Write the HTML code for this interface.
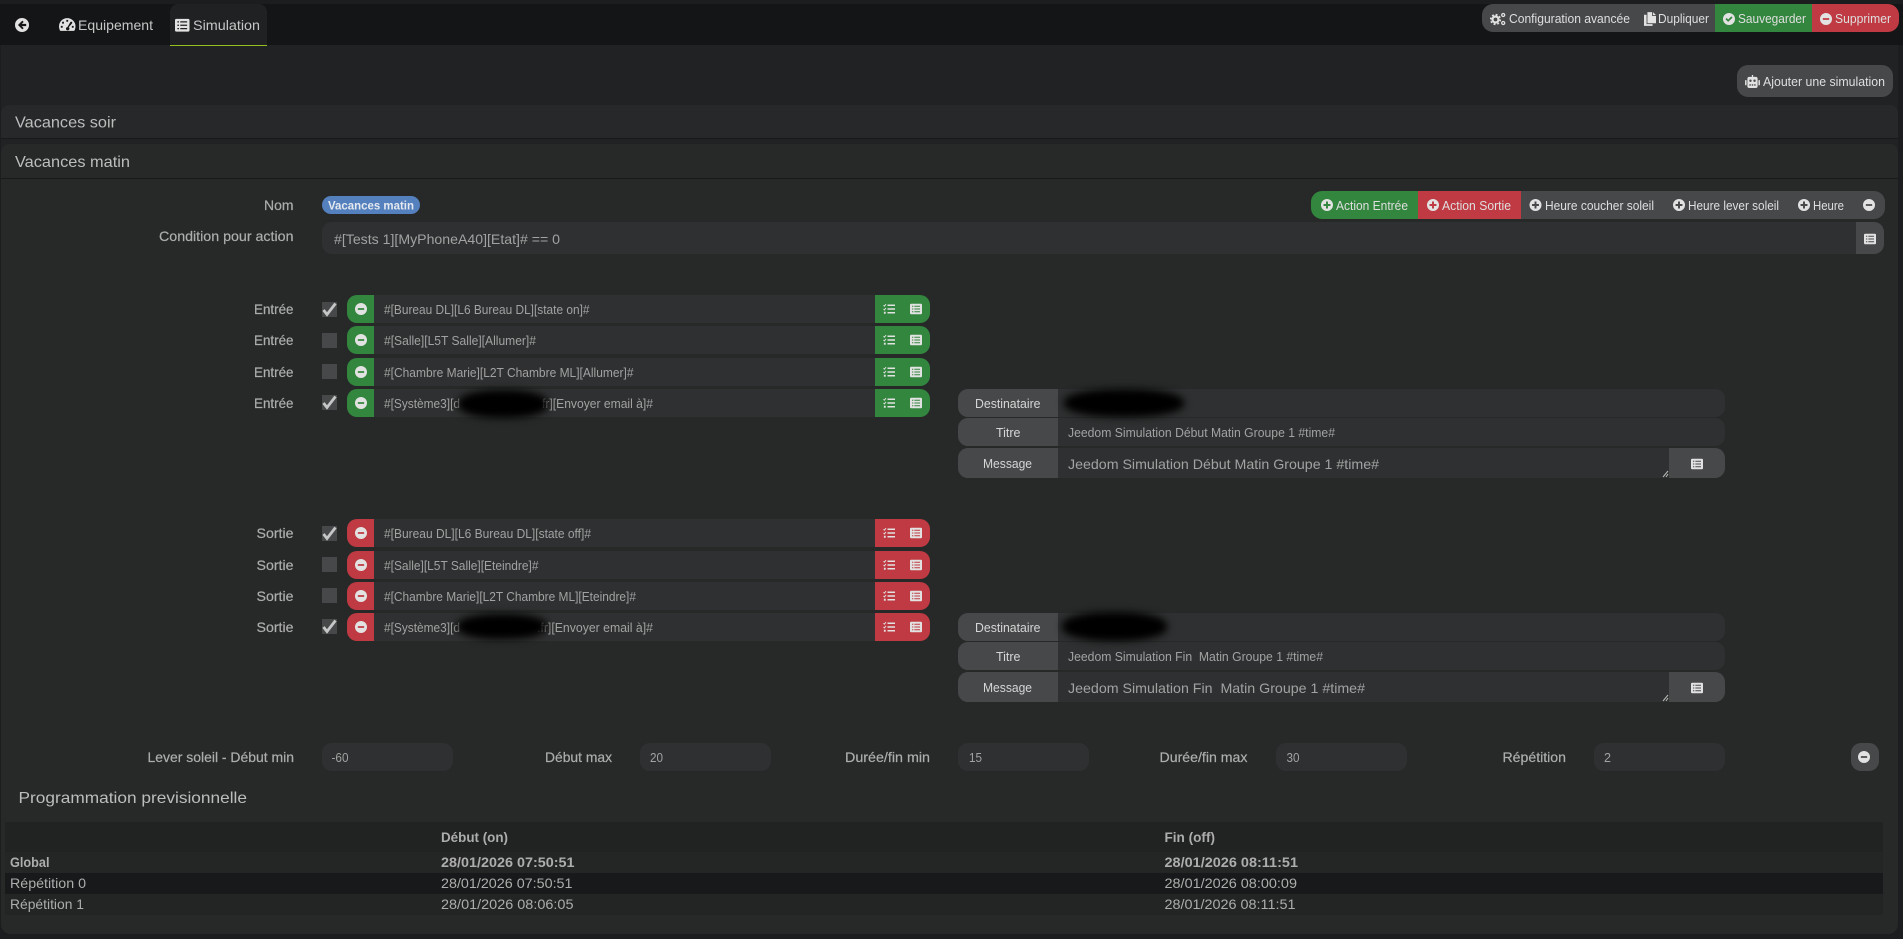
<!DOCTYPE html>
<html lang="fr"><head><meta charset="utf-8"><title>Simulation</title>
<style>
html,body{margin:0;padding:0;width:1903px;height:939px;overflow:hidden;background:#1c1d1e}
.b{position:absolute;box-sizing:border-box}
.inp{background:#2f3031}
.gr{background:#47484a}
.g{background:#33863e}
.r{background:#bf3a42}
svg.ov{position:absolute;left:0;top:0}
text{font-family:"Liberation Sans",Arial,sans-serif;font-size:14px;fill:#adadad;stroke:#adadad;stroke-width:.2px}
.w{fill:#dfdfdf;font-size:13px;stroke:none}
.h{fill:#c6c6c6;font-size:14px;stroke:none}
.hd{fill:#bdbdbd;font-size:16px;stroke:none}
.s{fill:#a2a2a2;font-size:12.5px;stroke:none}
.m{fill:#a2a2a2;font-size:14px;stroke:none}
.lb{fill:#d6d6d6;font-size:13px;stroke:none}
.t{stroke:none}
.bd{font-weight:bold;stroke:none}
.ic{color:#e2e2e2}
.blk{position:absolute;background:#000;filter:blur(4px);border-radius:45%}
</style></head><body>
<div class="b" style="left:0;top:4px;width:1903px;height:41px;background:#141516"></div>
<div class="b" style="left:0;top:45px;width:1903px;height:894px;background:#1c1d1e"></div>
<div class="b" style="left:1px;top:45px;width:1897px;height:889px;background:#212223;border-radius:0 0 10px 10px"></div>
<div class="b" style="left:170px;top:4px;width:97px;height:42px;background:#202122;border-radius:8px 8px 0 0;border-bottom:1px solid #93c01f"></div>

<div class="b" style="left:1px;top:105px;width:1897px;height:34px;background:#262829;border-radius:8px 8px 0 0;border-bottom:1px solid #18191a"></div>
<div class="b" style="left:1px;top:144px;width:1897px;height:790px;background:#272929;border-radius:8px 8px 10px 10px"></div>
<div class="b" style="left:1px;top:178px;width:1897px;height:1px;background:#18191a"></div>

<!-- top buttons -->
<div class="b gr" style="left:1482px;top:4px;width:233px;height:28px;border-radius:11px 0 0 11px"></div>
<div class="b g" style="left:1715px;top:4px;width:97px;height:28px"></div>
<div class="b r" style="left:1812px;top:4px;width:87px;height:28px;border-radius:0 11px 11px 0"></div>
<div class="b gr" style="left:1737px;top:65px;width:156px;height:32px;border-radius:11px"></div>

<!-- name/condition -->
<div class="b" style="left:322px;top:196px;width:98px;height:18px;background:#5480bd;border-radius:9px"></div>
<div class="b inp" style="left:322px;top:222px;width:1534px;height:32px;border-radius:10px 0 0 10px"></div>
<div class="b gr" style="left:1856px;top:222px;width:28px;height:32px;border-radius:0 10px 10px 0"></div>
<div class="b g" style="left:1311px;top:191px;width:107px;height:28px;border-radius:11px 0 0 11px"></div>
<div class="b r" style="left:1418px;top:191px;width:103px;height:28px"></div>
<div class="b gr" style="left:1521px;top:191px;width:364px;height:28px;border-radius:0 11px 11px 0"></div>

<!-- action rows entree -->
<div class="b g" style="left:347px;top:295px;width:583px;height:28px;border-radius:10px"></div>
<div class="b inp" style="left:374px;top:295px;width:501px;height:28px"></div>
<div class="b g" style="left:347px;top:326px;width:583px;height:28px;border-radius:10px"></div>
<div class="b inp" style="left:374px;top:326px;width:501px;height:28px"></div>
<div class="b g" style="left:347px;top:358px;width:583px;height:28px;border-radius:10px"></div>
<div class="b inp" style="left:374px;top:358px;width:501px;height:28px"></div>
<div class="b g" style="left:347px;top:389px;width:583px;height:28px;border-radius:10px"></div>
<div class="b inp" style="left:374px;top:389px;width:501px;height:28px"></div>
<!-- action rows sortie -->
<div class="b r" style="left:347px;top:519px;width:583px;height:28px;border-radius:10px"></div>
<div class="b inp" style="left:374px;top:519px;width:501px;height:28px"></div>
<div class="b r" style="left:347px;top:551px;width:583px;height:28px;border-radius:10px"></div>
<div class="b inp" style="left:374px;top:551px;width:501px;height:28px"></div>
<div class="b r" style="left:347px;top:582px;width:583px;height:28px;border-radius:10px"></div>
<div class="b inp" style="left:374px;top:582px;width:501px;height:28px"></div>
<div class="b r" style="left:347px;top:613px;width:583px;height:28px;border-radius:10px"></div>
<div class="b inp" style="left:374px;top:613px;width:501px;height:28px"></div>
<!-- checkboxes -->
<div class="b gr" style="left:322px;top:302px;width:15px;height:15px"></div>
<div class="b gr" style="left:322px;top:333px;width:15px;height:15px"></div>
<div class="b gr" style="left:322px;top:364px;width:15px;height:15px"></div>
<div class="b gr" style="left:322px;top:395px;width:15px;height:15px"></div>
<div class="b gr" style="left:322px;top:526px;width:15px;height:15px"></div>
<div class="b gr" style="left:322px;top:557px;width:15px;height:15px"></div>
<div class="b gr" style="left:322px;top:588px;width:15px;height:15px"></div>
<div class="b gr" style="left:322px;top:619px;width:15px;height:15px"></div>

<!-- message groups -->
<div class="b gr" style="left:958px;top:389px;width:100px;height:28px;border-radius:10px 0 0 10px"></div>
<div class="b inp" style="left:1058px;top:389px;width:667px;height:28px;border-radius:0 10px 10px 0"></div>
<div class="b gr" style="left:958px;top:418px;width:100px;height:28px;border-radius:10px 0 0 10px"></div>
<div class="b inp" style="left:1058px;top:418px;width:667px;height:28px;border-radius:0 10px 10px 0"></div>
<div class="b gr" style="left:958px;top:448px;width:100px;height:30px;border-radius:10px 0 0 10px"></div>
<div class="b inp" style="left:1058px;top:448px;width:611px;height:30px"></div>
<div class="b gr" style="left:1669px;top:448px;width:56px;height:30px;border-radius:0 10px 10px 0"></div>

<div class="b gr" style="left:958px;top:613px;width:100px;height:28px;border-radius:10px 0 0 10px"></div>
<div class="b inp" style="left:1058px;top:613px;width:667px;height:28px;border-radius:0 10px 10px 0"></div>
<div class="b gr" style="left:958px;top:642px;width:100px;height:28px;border-radius:10px 0 0 10px"></div>
<div class="b inp" style="left:1058px;top:642px;width:667px;height:28px;border-radius:0 10px 10px 0"></div>
<div class="b gr" style="left:958px;top:672px;width:100px;height:30px;border-radius:10px 0 0 10px"></div>
<div class="b inp" style="left:1058px;top:672px;width:611px;height:30px"></div>
<div class="b gr" style="left:1669px;top:672px;width:56px;height:30px;border-radius:0 10px 10px 0"></div>

<!-- bottom inputs -->
<div class="b inp" style="left:322px;top:743px;width:131px;height:28px;border-radius:10px"></div>
<div class="b inp" style="left:640px;top:743px;width:131px;height:28px;border-radius:10px"></div>
<div class="b inp" style="left:958px;top:743px;width:131px;height:28px;border-radius:10px"></div>
<div class="b inp" style="left:1276px;top:743px;width:131px;height:28px;border-radius:10px"></div>
<div class="b inp" style="left:1594px;top:743px;width:131px;height:28px;border-radius:10px"></div>
<div class="b gr" style="left:1851px;top:743px;width:28px;height:28px;border-radius:10px"></div>

<!-- table -->
<div class="b" style="left:5px;top:822px;width:1878px;height:30px;background:#212222"></div>
<div class="b" style="left:5px;top:852px;width:1878px;height:21px;background:#242525"></div>
<div class="b" style="left:5px;top:873px;width:1878px;height:21px;background:#18191a"></div>
<div class="b" style="left:5px;top:894px;width:1878px;height:21px;background:#232424"></div>

<svg class="ov" width="1903" height="939" viewBox="0 0 1903 939" xmlns="http://www.w3.org/2000/svg">
<defs>
<symbol id="minus" viewBox="0 0 16 16"><path fill="currentColor" fill-rule="evenodd" d="M8 0a8 8 0 1 0 0 16A8 8 0 0 0 8 0zM3.8 6.9h8.4v2.2H3.8z"/></symbol>
<symbol id="plus" viewBox="0 0 16 16"><path fill="currentColor" fill-rule="evenodd" d="M8 0a8 8 0 1 0 0 16A8 8 0 0 0 8 0zM6.7 3.4h2.6v3.3h3.3v2.6H9.3v3.3H6.7V9.3H3.4V6.7h3.3z"/></symbol>
<symbol id="check" viewBox="0 0 16 16"><path fill="currentColor" fill-rule="evenodd" d="M8 0a8 8 0 1 0 0 16A8 8 0 0 0 8 0zM3.3 8.3l1.6-1.6 2 2 4.2-4.2 1.6 1.6-5.8 5.8z"/></symbol>
<symbol id="back" viewBox="0 0 16 16"><path fill="currentColor" fill-rule="evenodd" d="M8 0a8 8 0 1 0 0 16A8 8 0 0 0 8 0zM8.4 3l1.5 1.5-2.2 2.2h5.1v2.6H7.7l2.2 2.2L8.4 13l-5-5z"/></symbol>
<symbol id="tbl" viewBox="0 0 16 16"><path fill="currentColor" fill-rule="evenodd" d="M1.5 1H14.5A1.5 1.5 0 0 1 16 2.5V13.5A1.5 1.5 0 0 1 14.5 15H1.5A1.5 1.5 0 0 1 0 13.5V2.5A1.5 1.5 0 0 1 1.5 1ZM2.6 3.6V5H4.4V3.6zM5.8 3.6V5H13.4V3.6zM2.6 7.3V8.7H4.4V7.3zM5.8 7.3V8.7H13.4V7.3zM2.6 11v1.4H4.4V11zM5.8 11v1.4H13.4V11z"/></symbol>
<symbol id="tasks" viewBox="0 0 16 16"><path fill="currentColor" d="M6 2h10v2H6zM6 7h10v2H6zM6 12h10v2H6zM1.2 11.7h2.4v2.6H1.2z"/><path fill="none" stroke="currentColor" stroke-width="1.3" d="M.7 3l1.2 1.2L4 1.5M.7 8l1.2 1.2L4 6.5"/></symbol>
<symbol id="gauge" viewBox="0 0 18 16"><path fill="currentColor" fill-rule="evenodd" d="M9 1a9 9 0 0 0-9 9c0 1.7.5 3.3 1.2 4.7.2.2.5.3.8.3h14c.3 0 .6-.1.8-.3.7-1.4 1.2-3 1.2-4.7a9 9 0 0 0-9-9zM8 3h2v2H8zM3.4 5h2v2h-2zM2 9.5h2v2H2zM14 9.5h2v2h-2zM12.6 5h1.8v1.6L10.6 11a1.9 1.9 0 1 1-3 1.7 1.9 1.9 0 0 1 1.6-1.8z"/></symbol>
<symbol id="copy" viewBox="0 0 14 16"><path fill="currentColor" d="M4 0h5.5v4.5H14V13H4zM10.5 0 14 3.5h-3.5zM0 3h3v11h7v2H0z"/></symbol>
<symbol id="cogs" viewBox="0 0 16 14"><g fill="none" stroke="currentColor"><circle cx="5.5" cy="7.5" r="3" stroke-width="2.2"/><circle cx="5.5" cy="7.5" r="4.8" stroke-width="1.6" stroke-dasharray="1.9 1.87"/><circle cx="13.2" cy="3" r="1.5" stroke-width="1.3"/><circle cx="13.2" cy="11" r="1.5" stroke-width="1.3"/></g></symbol>
<symbol id="robot" viewBox="0 0 16 14"><path fill="currentColor" fill-rule="evenodd" d="M7.3 0h1.4v2H7.3zM4.5 2h7A2 2 0 0 1 13.5 4v8a2 2 0 0 1-2 2h-7A2 2 0 0 1 2.5 12V4A2 2 0 0 1 4.5 2ZM4.5 6.2a1.3 1.3 0 1 0 2.6 0 1.3 1.3 0 1 0-2.6 0ZM8.9 6.2a1.3 1.3 0 1 0 2.6 0 1.3 1.3 0 1 0-2.6 0ZM4.6 10v1.4h1.6V10zM7.2 10v1.4h1.6V10zM9.8 10v1.4h1.6V10zM0 5.5h1.6v5.5H0zM14.4 5.5H16v5.5h-1.6z"/></symbol>
</defs>

<g class="ic">
<use href="#back" x="15" y="18" width="14" height="14"/>
<use href="#gauge" x="59" y="17" width="16.5" height="15"/>
<use href="#tbl" x="175" y="18" width="14.5" height="14.5"/>
<use href="#cogs" x="1490" y="12" width="16" height="14"/>
<use href="#copy" x="1644" y="12" width="12" height="14"/>
<use href="#check" x="1723" y="13" width="12" height="12"/>
<use href="#minus" x="1820" y="13" width="12" height="12"/>
<use href="#robot" x="1745" y="75" width="15" height="13"/>
<use href="#plus" x="1321" y="199" width="12" height="12"/>
<use href="#plus" x="1427" y="199" width="12" height="12"/>
<use href="#plus" x="1529.5" y="199" width="12" height="12"/>
<use href="#plus" x="1673" y="199" width="12" height="12"/>
<use href="#plus" x="1798" y="199" width="12" height="12"/>
<use href="#minus" x="1863" y="199" width="12" height="12"/>
<use href="#tbl" x="1864" y="233" width="12" height="12"/>
<!-- row icons -->
<use href="#minus" x="355" y="303" width="12" height="12"/><use href="#tasks" x="883" y="303" width="12" height="12"/><use href="#tbl" x="910" y="303" width="12" height="12"/>
<use href="#minus" x="355" y="334" width="12" height="12"/><use href="#tasks" x="883" y="334" width="12" height="12"/><use href="#tbl" x="910" y="334" width="12" height="12"/>
<use href="#minus" x="355" y="366" width="12" height="12"/><use href="#tasks" x="883" y="366" width="12" height="12"/><use href="#tbl" x="910" y="366" width="12" height="12"/>
<use href="#minus" x="355" y="397" width="12" height="12"/><use href="#tasks" x="883" y="397" width="12" height="12"/><use href="#tbl" x="910" y="397" width="12" height="12"/>
<use href="#minus" x="355" y="527" width="12" height="12"/><use href="#tasks" x="883" y="527" width="12" height="12"/><use href="#tbl" x="910" y="527" width="12" height="12"/>
<use href="#minus" x="355" y="559" width="12" height="12"/><use href="#tasks" x="883" y="559" width="12" height="12"/><use href="#tbl" x="910" y="559" width="12" height="12"/>
<use href="#minus" x="355" y="590" width="12" height="12"/><use href="#tasks" x="883" y="590" width="12" height="12"/><use href="#tbl" x="910" y="590" width="12" height="12"/>
<use href="#minus" x="355" y="621" width="12" height="12"/><use href="#tasks" x="883" y="621" width="12" height="12"/><use href="#tbl" x="910" y="621" width="12" height="12"/>
<use href="#tbl" x="1691" y="458" width="12" height="12"/>
<use href="#tbl" x="1691" y="682" width="12" height="12"/>
<use href="#minus" x="1858" y="751" width="12" height="12"/>
</g>

<!-- checkbox ticks -->
<g fill="none" stroke="#c6c6c6" stroke-width="2.8">
<path d="M323.5 310l3.5 4.5 8.5-11"/>
<path d="M323.5 403l3.5 4.5 8.5-11"/>
<path d="M323.5 534l3.5 4.5 8.5-11"/>
<path d="M323.5 627l3.5 4.5 8.5-11"/>
</g>
<!-- textarea resize handles -->
<g stroke="#bbb" stroke-width="1"><path d="M1663 477l5-6M1666 477l2-3M1663 701l5-6M1666 701l2-3"/></g>

<!-- header -->
<text class="h" x="78" y="30" textLength="75" lengthAdjust="spacingAndGlyphs">Equipement</text>
<text class="h" x="193" y="30" textLength="67" lengthAdjust="spacingAndGlyphs">Simulation</text>
<text class="w" x="1509" y="23" textLength="121" lengthAdjust="spacingAndGlyphs">Configuration avancée</text>
<text class="w" x="1658" y="23" textLength="51" lengthAdjust="spacingAndGlyphs">Dupliquer</text>
<text class="w" x="1738" y="23" textLength="68" lengthAdjust="spacingAndGlyphs">Sauvegarder</text>
<text class="w" x="1835" y="23" textLength="56" lengthAdjust="spacingAndGlyphs">Supprimer</text>
<text class="w" x="1763" y="86" textLength="122" lengthAdjust="spacingAndGlyphs">Ajouter une simulation</text>

<text class="hd" x="15" y="127.5" textLength="101" lengthAdjust="spacingAndGlyphs">Vacances soir</text>
<text class="hd" x="15" y="167" textLength="115" lengthAdjust="spacingAndGlyphs">Vacances matin</text>

<text x="264" y="210" textLength="29.5" lengthAdjust="spacingAndGlyphs">Nom</text>
<text class="bd" style="font-size:12px;fill:#e4e8ef" x="328" y="209.5" textLength="86" lengthAdjust="spacingAndGlyphs">Vacances matin</text>
<text x="159" y="241" textLength="134.5" lengthAdjust="spacingAndGlyphs">Condition pour action</text>
<text class="m" x="334" y="244" textLength="226" lengthAdjust="spacingAndGlyphs">#[Tests 1][MyPhoneA40][Etat]# == 0</text>

<text class="w" x="1336" y="210" textLength="72" lengthAdjust="spacingAndGlyphs">Action Entrée</text>
<text class="w" x="1442" y="210" textLength="69" lengthAdjust="spacingAndGlyphs">Action Sortie</text>
<text class="w" x="1545" y="210" textLength="109" lengthAdjust="spacingAndGlyphs">Heure coucher soleil</text>
<text class="w" x="1688" y="210" textLength="91" lengthAdjust="spacingAndGlyphs">Heure lever soleil</text>
<text class="w" x="1813" y="210" textLength="31" lengthAdjust="spacingAndGlyphs">Heure</text>

<!-- entree -->
<text x="254" y="314" textLength="39.5" lengthAdjust="spacingAndGlyphs">Entrée</text>
<text x="254" y="345" textLength="39.5" lengthAdjust="spacingAndGlyphs">Entrée</text>
<text x="254" y="377" textLength="39.5" lengthAdjust="spacingAndGlyphs">Entrée</text>
<text x="254" y="408" textLength="39.5" lengthAdjust="spacingAndGlyphs">Entrée</text>
<text class="s" x="384" y="314" textLength="205.5" lengthAdjust="spacingAndGlyphs">#[Bureau DL][L6 Bureau DL][state on]#</text>
<text class="s" x="384" y="345" textLength="152" lengthAdjust="spacingAndGlyphs">#[Salle][L5T Salle][Allumer]#</text>
<text class="s" x="384" y="377" textLength="249.5" lengthAdjust="spacingAndGlyphs">#[Chambre Marie][L2T Chambre ML][Allumer]#</text>
<text class="s" x="384" y="408" textLength="76" lengthAdjust="spacingAndGlyphs">#[Système3][d</text>
<text class="s" x="542" y="408" textLength="111" lengthAdjust="spacingAndGlyphs">fr][Envoyer email à]#</text>

<!-- sortie -->
<text x="256.5" y="538" textLength="37" lengthAdjust="spacingAndGlyphs">Sortie</text>
<text x="256.5" y="570" textLength="37" lengthAdjust="spacingAndGlyphs">Sortie</text>
<text x="256.5" y="601" textLength="37" lengthAdjust="spacingAndGlyphs">Sortie</text>
<text x="256.5" y="632" textLength="37" lengthAdjust="spacingAndGlyphs">Sortie</text>
<text class="s" x="384" y="538" textLength="207" lengthAdjust="spacingAndGlyphs">#[Bureau DL][L6 Bureau DL][state off]#</text>
<text class="s" x="384" y="570" textLength="154.5" lengthAdjust="spacingAndGlyphs">#[Salle][L5T Salle][Eteindre]#</text>
<text class="s" x="384" y="601" textLength="252" lengthAdjust="spacingAndGlyphs">#[Chambre Marie][L2T Chambre ML][Eteindre]#</text>
<text class="s" x="384" y="632" textLength="76" lengthAdjust="spacingAndGlyphs">#[Système3][d</text>
<text class="s" x="537" y="632" textLength="116" lengthAdjust="spacingAndGlyphs">.fr][Envoyer email à]#</text>

<!-- message group labels -->
<text class="lb" x="975" y="408" textLength="65.5" lengthAdjust="spacingAndGlyphs">Destinataire</text>
<text class="lb" x="996" y="437" textLength="24.5" lengthAdjust="spacingAndGlyphs">Titre</text>
<text class="lb" x="983" y="468" textLength="49" lengthAdjust="spacingAndGlyphs">Message</text>
<text class="s" x="1068" y="437" textLength="267" lengthAdjust="spacingAndGlyphs">Jeedom Simulation Début Matin Groupe 1 #time#</text>
<text class="m" x="1068" y="469" textLength="311" lengthAdjust="spacingAndGlyphs">Jeedom Simulation Début Matin Groupe 1 #time#</text>

<text class="lb" x="975" y="632" textLength="65.5" lengthAdjust="spacingAndGlyphs">Destinataire</text>
<text class="lb" x="996" y="661" textLength="24.5" lengthAdjust="spacingAndGlyphs">Titre</text>
<text class="lb" x="983" y="692" textLength="49" lengthAdjust="spacingAndGlyphs">Message</text>
<text class="s" x="1068" y="661" textLength="255" xml:space="preserve" lengthAdjust="spacingAndGlyphs">Jeedom Simulation Fin  Matin Groupe 1 #time#</text>
<text class="m" x="1068" y="693" textLength="297" xml:space="preserve" lengthAdjust="spacingAndGlyphs">Jeedom Simulation Fin  Matin Groupe 1 #time#</text>

<!-- bottom inputs -->
<text x="147.5" y="762" textLength="146.5" lengthAdjust="spacingAndGlyphs">Lever soleil - Début min</text>
<text class="s" x="331.5" y="762" textLength="17" lengthAdjust="spacingAndGlyphs">-60</text>
<text x="545" y="762" textLength="67" lengthAdjust="spacingAndGlyphs">Début max</text>
<text class="s" x="650" y="762" textLength="13" lengthAdjust="spacingAndGlyphs">20</text>
<text x="845" y="762" textLength="85" lengthAdjust="spacingAndGlyphs">Durée/fin min</text>
<text class="s" x="969" y="762" textLength="13" lengthAdjust="spacingAndGlyphs">15</text>
<text x="1159.5" y="762" textLength="88" lengthAdjust="spacingAndGlyphs">Durée/fin max</text>
<text class="s" x="1286.5" y="762" textLength="13" lengthAdjust="spacingAndGlyphs">30</text>
<text x="1502.5" y="762" textLength="63.5" lengthAdjust="spacingAndGlyphs">Répétition</text>
<text class="s" x="1604" y="762" textLength="7" lengthAdjust="spacingAndGlyphs">2</text>

<!-- table -->
<text class="hd" x="18.5" y="803" textLength="228.5" lengthAdjust="spacingAndGlyphs">Programmation previsionnelle</text>
<text class="bd" x="441" y="842" textLength="67" lengthAdjust="spacingAndGlyphs">Début (on)</text>
<text class="bd" x="1164.5" y="842" textLength="50.5" lengthAdjust="spacingAndGlyphs">Fin (off)</text>
<text class="bd" x="10" y="867" textLength="39.5" lengthAdjust="spacingAndGlyphs">Global</text>
<text class="bd" x="441" y="867" textLength="133.5" lengthAdjust="spacingAndGlyphs">28/01/2026 07:50:51</text>
<text class="bd" x="1164.5" y="867" textLength="133.5" lengthAdjust="spacingAndGlyphs">28/01/2026 08:11:51</text>
<text class="t" x="10" y="888" textLength="76" lengthAdjust="spacingAndGlyphs">Répétition 0</text>
<text class="t" x="441" y="888" textLength="131.5" lengthAdjust="spacingAndGlyphs">28/01/2026 07:50:51</text>
<text class="t" x="1164.5" y="888" textLength="132.5" lengthAdjust="spacingAndGlyphs">28/01/2026 08:00:09</text>
<text class="t" x="10" y="909" textLength="74" lengthAdjust="spacingAndGlyphs">Répétition 1</text>
<text class="t" x="441" y="909" textLength="132.5" lengthAdjust="spacingAndGlyphs">28/01/2026 08:06:05</text>
<text class="t" x="1164.5" y="909" textLength="131" lengthAdjust="spacingAndGlyphs">28/01/2026 08:11:51</text>
</svg>

<!-- redaction marks -->
<div class="blk" style="left:458px;top:390px;width:90px;height:28px"></div>
<div class="blk" style="left:457px;top:614px;width:90px;height:25px"></div>
<div class="blk" style="left:1064px;top:389px;width:120px;height:28px"></div>
<div class="blk" style="left:1062px;top:612px;width:105px;height:29px"></div>
</body></html>
